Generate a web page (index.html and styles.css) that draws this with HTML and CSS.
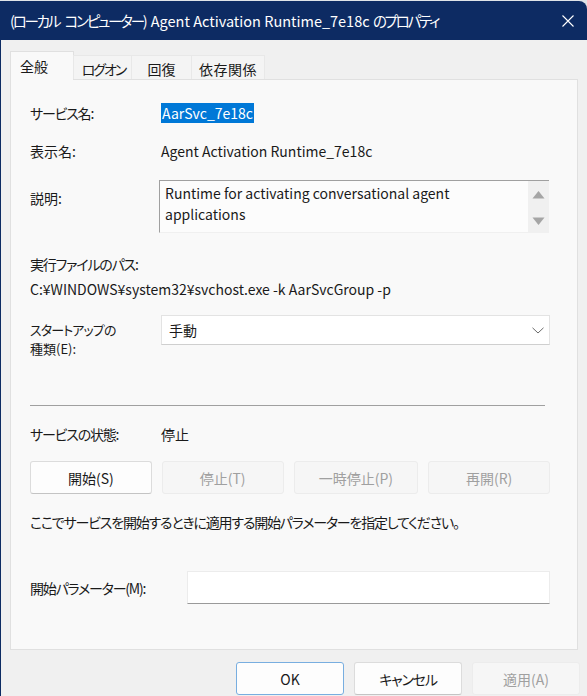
FILE: index.html
```html
<!DOCTYPE html>
<html lang="ja">
<head>
<meta charset="utf-8">
<title>プロパティ</title>
<link rel="stylesheet" href="styles.css">
</head>
<body>
<div class="window">
  <div class="titlebar">
    <span class="title"><span class="tk">(ローカル</span> <span class="tk">コンピューター)</span> Agent Activation Runtime_7e18c <span class="tk">のプロパティ</span></span>
    <span class="close" aria-label="閉じる">
      <svg width="12" height="12" viewBox="0 0 12 12"><path d="M0.5 0.5L11.5 11.5M11.5 0.5L0.5 11.5" stroke="#fff" stroke-width="1.1" fill="none"/></svg>
    </span>
  </div>
  <div class="content">
    <div class="tabs">
      <div class="tab active">全般</div>
      <div class="tab t2"><span class="tabk">ログオン</span></div>
      <div class="tab t3">回復</div>
      <div class="tab t4">依存関係</div>
    </div>
    <div class="panel">
      <div class="row r1">
        <div class="label k">サービス名:</div>
        <div class="value"><span class="sel">AarSvc_7e18c</span></div>
      </div>
      <div class="row r2">
        <div class="label">表示名:</div>
        <div class="value">Agent Activation Runtime_7e18c</div>
      </div>
      <div class="row r3">
        <div class="label lab-desc">説明:</div>
        <div class="descbox">
          <div class="desctext">Runtime for activating conversational agent applications</div>
          <div class="scroll">
            <svg width="13" height="9" viewBox="0 0 13 9"><path d="M6.5 1L12.5 8.5H0.5Z" fill="#a5a5a5"/></svg>
            <svg width="13" height="9" viewBox="0 0 13 9"><path d="M0.5 0.5H12.5L6.5 8Z" fill="#a5a5a5"/></svg>
          </div>
        </div>
      </div>
      <div class="line r4 k">実行ファイルのパス:</div>
      <div class="line r5">C:¥WINDOWS¥system32¥svchost.exe -k AarSvcGroup -p</div>
      <div class="row r6">
        <div class="label lab-start"><div class="k">スタートアップの</div><div>種類(E):</div></div>
        <div class="select">
          <span>手動</span>
          <svg width="12" height="7" viewBox="0 0 12 7"><path d="M0.5 0.8L6 6L11.5 0.8" stroke="#6a6a6a" stroke-width="1" fill="none"/></svg>
        </div>
      </div>
      <div class="sep"></div>
      <div class="row r7">
        <div class="label k">サービスの状態:</div>
        <div class="value">停止</div>
      </div>
      <div class="btnrow">
        <div class="btn">開始(S)</div>
        <div class="btn disabled">停止(T)</div>
        <div class="btn disabled wide">一時停止(P)</div>
        <div class="btn disabled">再開(R)</div>
      </div>
      <div class="line r8 k">ここでサービスを開始するときに適用する開始パラメーターを指定してください。</div>
      <div class="row r9">
        <div class="label lab-param k">開始パラメーター(M):</div>
        <div class="input"></div>
      </div>
    </div>
    <div class="footer">
      <div class="btn fbtn ok">OK</div>
      <div class="btn fbtn"><span class="k">キャンセル</span></div>
      <div class="btn fbtn disabled">適用(A)</div>
    </div>
  </div>
</div>
</body>
</html>
```
FILE: styles.css
```css
html, body {
  margin: 0;
  padding: 0;
}
body {
  background: #dfe3e8;
  width: 587px;
  height: 696px;
  overflow: hidden;
  font-family: "Noto Sans CJK JP", "Noto Sans", sans-serif;
  font-feature-settings: "palt";
  font-size: 14px;
  color: #1a1a1a;
}
.k {
  letter-spacing: -1.2px;
}
.window {
  margin-top: 1px;
  height: 695px;
  background: #f0f0f0;
  border-left: 1px solid #0d2b63;
  border-top-right-radius: 8px;
  overflow: hidden;
  box-sizing: border-box;
}
.titlebar {
  height: 39px;
  background: #0d2b63;
  color: #fff;
  display: flex;
  align-items: center;
  padding-left: 9px;
  font-size: 14.5px;
}
.title {
  flex: 1;
  white-space: nowrap;
  line-height: 20px;
  margin-top: 1px;
}
.tk {
  letter-spacing: -2.2px;
  padding-right: 2px;
}
.close {
  width: 12px;
  height: 12px;
  margin-right: 13px;
  display: flex;
}
.content {
  padding: 0 8px 0 9px;
}
.tabs {
  display: flex;
  align-items: flex-end;
  height: 28px;
  margin-top: 11px;
  position: relative;
  z-index: 1;
}
.tab {
  height: 24px;
  line-height: 26px;
  background: #f4f4f4;
  border: 1px solid #e8e8e8;
  border-bottom: none;
  box-sizing: border-box;
  text-align: center;
  margin-left: -1px;
}
.tabk {
  letter-spacing: -2px;
  margin-right: -2px;
}
.tab.active {
  height: 29px;
  line-height: 28px;
  width: 64px;
  background: #f9f9f9;
  border-color: #e0e0e0;
  margin-left: 0;
  margin-bottom: -1px;
  padding-right: 16px;
}
.t2 { width: 59px; }
.t3 { width: 61px; }
.t4 { width: 74px; letter-spacing: 0.5px; }
.panel {
  width: 568px;
  height: 571px;
  box-sizing: border-box;
  background: #f9f9f9;
  border: 1px solid #e0e0e0;
  padding: 23px 27px 0 19px;
}
.row {
  display: flex;
  align-items: center;
}
.label {
  width: 131px;
  flex: none;
  white-space: nowrap;
  line-height: 20px;
}
.value {
  line-height: 20px;
  white-space: nowrap;
}
.sel {
  background: #0078d7;
  color: #fff;
  display: inline-block;
  padding: 0 1px 0 1px;
  line-height: 20px;
}
.r1 { height: 20px; }
.r2 { height: 20px; margin-top: 18px; }
.r3 { margin-top: 19px; align-items: flex-start; }
.lab-desc { margin-top: 8px; width: 129px; }
.descbox {
  width: 390px;
  height: 53px;
  box-sizing: border-box;
  border-top: 1px solid #a0a0a0;
  border-left: 1px solid #a0a0a0;
  border-bottom: 1px solid #f0f0f0;
  background: #fcfcfc;
  display: flex;
}
.desctext {
  flex: 1;
  padding: 2px 8px 0 5px;
  line-height: 21px;
}
.scroll {
  width: 21px;
  background: #f0f0f0;
  display: flex;
  flex-direction: column;
  align-items: center;
  justify-content: space-between;
  padding: 9px 0 6px;
  box-sizing: border-box;
}
.line {
  line-height: 20px;
  white-space: nowrap;
}
.r4 { margin-top: 21px; }
.r5 { margin-top: 5px; }
.r6 { margin-top: 16px; align-items: flex-start; height: 42px; }
.lab-start { margin-top: 5px; font-size: 13px; }
.lab-start div { height: 19px; line-height: 19px; }
.lab-start .k { letter-spacing: -0.9px; }
.select {
  width: 389px;
  height: 30px;
  box-sizing: border-box;
  background: #fff;
  border: 1px solid #e3e3e3;
  border-bottom-color: #cfcfcf;
  display: flex;
  align-items: center;
  justify-content: space-between;
  padding: 0 5px 0 7px;
}
.sep {
  width: 515px;
  height: 1px;
  background: #a0a0a0;
  margin-top: 48px;
}
.r7 { margin-top: 18px; height: 20px; }
.btnrow {
  display: flex;
  gap: 10px;
  margin-top: 17px;
}
.btn {
  height: 33px;
  width: 122px;
  box-sizing: border-box;
  border: 1px solid #dcdcdc;
  border-bottom-color: #c4c4c4;
  border-radius: 3px;
  background: #fdfdfd;
  display: flex;
  align-items: center;
  justify-content: center;
  color: #1a1a1a;
}
.btn.wide { width: 125px; }
.btn.disabled {
  background: #f6f6f6;
  border-color: #ececec;
  color: #a0a0a0;
}
.r8 { margin-top: 18px; }
.r9 { margin-top: 39px; }
.lab-param { width: 157px; }
.input {
  width: 363px;
  height: 33px;
  box-sizing: border-box;
  background: #fff;
  border: 1px solid #ececec;
  border-bottom-color: #9a9a9a;
}
.footer {
  display: flex;
  justify-content: flex-end;
  gap: 10px;
  margin-top: 12px;
  margin-right: -1px;
}
.fbtn { width: 108px; }
.fbtn.ok {
  border: 1px solid #78aee0;
}
```
